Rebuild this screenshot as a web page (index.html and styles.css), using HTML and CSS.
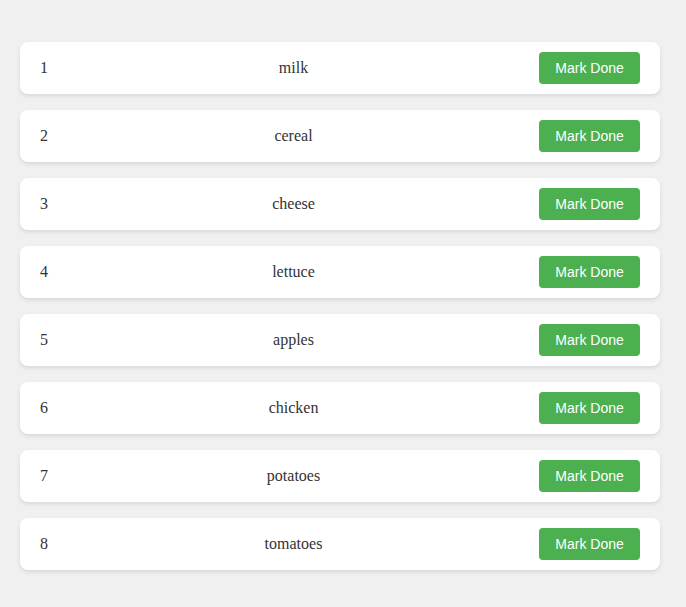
FILE: index.html
```html
<!DOCTYPE html>
<html>
<head>
<meta charset="utf-8">
<link rel="stylesheet" href="styles.css">
</head>
<body>
<ul class="list">
  <li class="item"><span class="num">1</span><span class="name">milk</span><button class="btn">Mark Done</button></li>
  <li class="item"><span class="num">2</span><span class="name">cereal</span><button class="btn">Mark Done</button></li>
  <li class="item"><span class="num">3</span><span class="name">cheese</span><button class="btn">Mark Done</button></li>
  <li class="item"><span class="num">4</span><span class="name">lettuce</span><button class="btn">Mark Done</button></li>
  <li class="item"><span class="num">5</span><span class="name">apples</span><button class="btn">Mark Done</button></li>
  <li class="item"><span class="num">6</span><span class="name">chicken</span><button class="btn">Mark Done</button></li>
  <li class="item"><span class="num">7</span><span class="name">potatoes</span><button class="btn">Mark Done</button></li>
  <li class="item"><span class="num">8</span><span class="name">tomatoes</span><button class="btn">Mark Done</button></li>
</ul>
</body>
</html>
```
FILE: styles.css
```css
html, body {
  margin: 0;
  padding: 0;
  background: #f0f0f0;
}
body {
  padding: 42px 26px 20px 20px;
  font-family: "Liberation Serif", serif;
  font-size: 16px;
  color: #333;
}
.list {
  list-style: none;
  margin: 0;
  padding: 0;
  display: flex;
  flex-direction: column;
  gap: 16px;
}
.item {
  display: flex;
  align-items: center;
  background: #fff;
  border-radius: 8px;
  box-shadow: 0 2px 4px rgba(0,0,0,0.1);
  padding: 10px 20px;
  height: 32px;
}
.num {
  line-height: 18px;
}
.name {
  flex: 1;
  text-align: center;
  line-height: 18px;
}
.btn {
  font-family: "Liberation Sans", Arial, sans-serif;
  font-size: 14px;
  color: #fff;
  background: #4caf50;
  border: none;
  border-radius: 4px;
  padding: 0;
  width: 101px;
  height: 32px;
  line-height: 16px;
  text-align: center;
}
```
